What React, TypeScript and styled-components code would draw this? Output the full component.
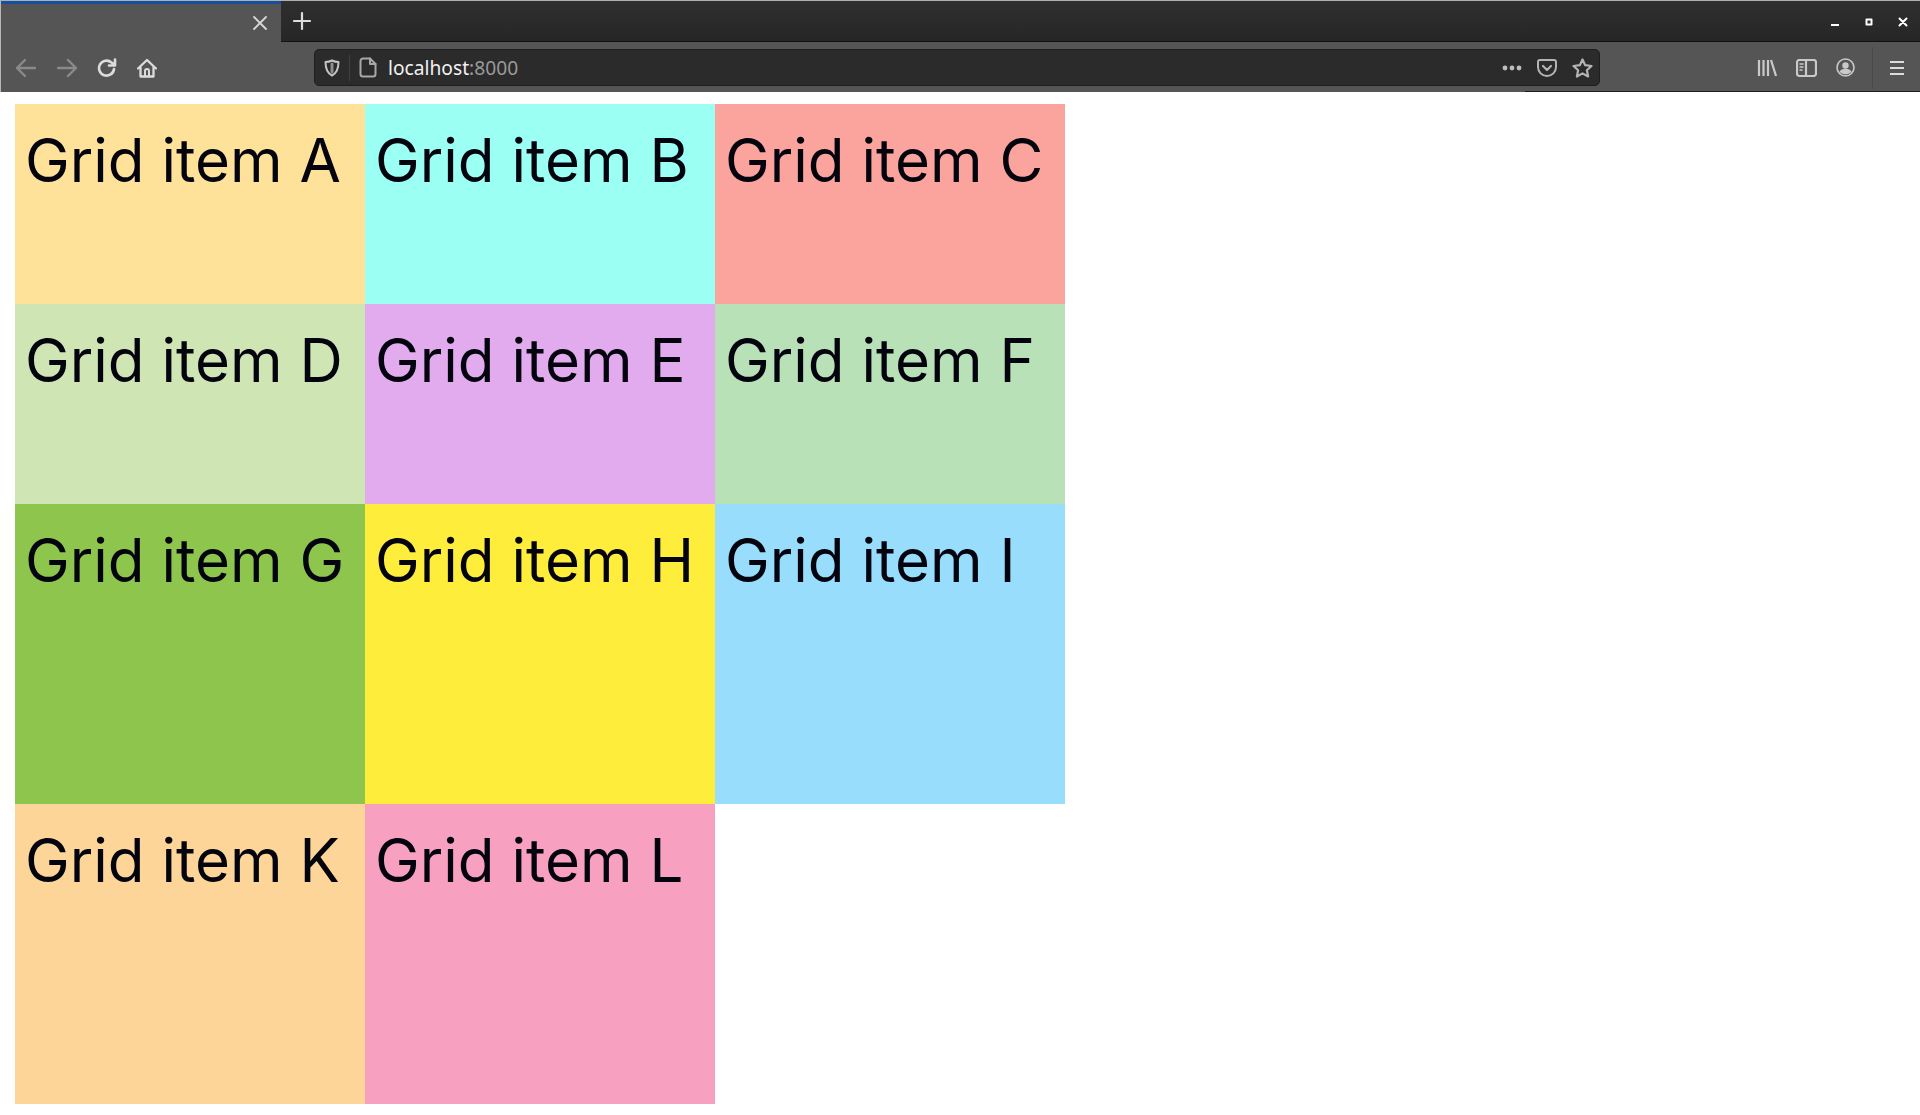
import React from 'react';
import styled, { createGlobalStyle } from 'styled-components';

const Global = createGlobalStyle`
  html, body { margin: 0; padding: 0; background: #fff; overflow: hidden; }
  body { font-family: Inter, "Liberation Sans", sans-serif; }
`;

const Screen = styled.div`
  width: 1920px;
  height: 1115px;
  display: flex;
  flex-direction: column;
  overflow: hidden;
  background: #fff;
`;

const Browser = styled.header`
  display: flex;
  flex-direction: column;
  flex: none;
  height: 92px;
  border-left: 1px solid #b8b8b8;
  border-top: 1px solid #b0b0b0;
  box-sizing: border-box;
  background: #555;
  position: relative;
`;

const TabStrip = styled.div`
  display: flex;
  height: 41px;
  flex: none;
  background: linear-gradient(#2f2f2f, #262626);
  border-bottom: 1px solid #111;
  box-sizing: border-box;
`;

const Tab = styled.div`
  width: 280px;
  height: 41px;
  flex: none;
  box-sizing: border-box;
  background: #555;
  border-top: 3px solid #17509f;
  display: flex;
  align-items: center;
  justify-content: flex-end;
  padding: 0 13px 0 0;
`;

const NewTab = styled.button`
  width: 42px;
  height: 40px;
  border: 0;
  padding: 0;
  background: transparent;
  display: flex;
  align-items: center;
  justify-content: center;
`;

const Spacer = styled.div`
  flex: 1;
`;

const WindowControls = styled.div`
  display: flex;
  align-items: center;
  gap: 18px;
  padding: 2px 9px 0 0;
`;

const WinButton = styled.div`
  width: 16px;
  height: 16px;
  display: flex;
  align-items: center;
  justify-content: center;
`;

const Toolbar = styled.div`
  height: 50px;
  flex: none;
  display: flex;
  align-items: center;
  box-sizing: border-box;
  padding: 1px 0 0 0;
  background: #555;
`;

const NavGroup = styled.div`
  width: 313px;
  flex: none;
  display: flex;
  align-items: center;
  padding-left: 14px;
  box-sizing: border-box;
  gap: 20px;
`;

const ForwardSlot = styled.span`
  display: block;
  margin: 0 -1px 0 1px;
`;

const UrlBar = styled.div`
  width: 1286px;
  height: 37px;
  flex: none;
  box-sizing: border-box;
  background: #2b2b2b;
  border: 1px solid #1e1e1e;
  border-radius: 5px;
  display: flex;
  align-items: center;
  padding: 0 6px 0 9px;
`;

const Divider = styled.span`
  width: 1px;
  height: 26px;
  background: #3f3f3f;
  margin: 0 9px 0 9px;
  flex: none;
`;

const Url = styled.div`
  margin-left: 11px;
  font-family: "Noto Sans", sans-serif;
  font-size: 19.2px;
  color: #f2f2f2;
  flex: 1;
  white-space: nowrap;
`;

const Port = styled.span`
  color: #9a9a9a;
`;

const UrlActions = styled.div`
  display: flex;
  align-items: center;
  gap: 15px;
`;

const ToolActions = styled.div`
  flex: 1;
  display: flex;
  align-items: center;
  justify-content: flex-end;
  gap: 19px;
  padding-right: 15px;
`;

const ToolSep = styled.span`
  width: 1px;
  height: 42px;
  background: #4a4a4a;
  margin: 0 -3px 0 -2px;
`;

const EdgeLine = styled.div`
  position: absolute;
  left: 1524px;
  right: 0;
  bottom: 0;
  height: 1px;
  background: #1d1d1d;
`;

const Page = styled.main`
  flex: 1;
  padding: 12px 15px 0;
`;

const Grid = styled.div`
  display: grid;
  grid-template-columns: repeat(3, 350px);
  grid-template-rows: 200px 200px 300px 300px;
  width: 1050px;
`;

const Cell = styled.div<{ $bg: string }>`
  background: ${p => p.$bg};
  color: #04040f;
  font-family: Inter, sans-serif;
  font-size: 60px;
  line-height: 74px;
  padding: 19px 10px;
  box-sizing: border-box;
  white-space: nowrap;
`;

const Ico = styled.svg`
  display: block;
  flex: none;
  fill: none;
  stroke-linecap: round;
  stroke-linejoin: round;
`;

const items: [string, string][] = [
  ['A', '#ffe299'], ['B', '#9cfff3'], ['C', '#faa49d'],
  ['D', '#d0e5b4'], ['E', '#e1abed'], ['F', '#b9e1b8'],
  ['G', '#8ec54c'], ['H', '#ffed3c'], ['I', '#99ddfd'],
  ['K', '#fed598'], ['L', '#f8a0bf'],
];

export default function App() {
  return (
    <Screen>
      <Global />
      <Browser>
        <TabStrip>
          <Tab>
            <Ico width="16" height="16" viewBox="0 0 16 16" stroke="#d8d8d8" strokeWidth="1.8">
              <path d="M2 2 14 14M14 2 2 14" />
            </Ico>
          </Tab>
          <NewTab>
            <Ico width="20" height="20" viewBox="0 0 20 20" stroke="#dcdcdc" strokeWidth="2.2">
              <path d="M10 2v16M2 10h16" />
            </Ico>
          </NewTab>
          <Spacer />
          <WindowControls>
            <WinButton>
              <Ico width="10" height="10" viewBox="0 0 10 10" stroke="#fff" strokeWidth="2">
                <path d="M1 8h8" strokeLinecap="butt" />
              </Ico>
            </WinButton>
            <WinButton>
              <Ico width="8" height="8" viewBox="0 0 8 8" stroke="#fff" strokeWidth="2">
                <rect x="1.5" y="1.5" width="5" height="5" />
              </Ico>
            </WinButton>
            <WinButton>
              <Ico width="10" height="10" viewBox="0 0 10 10" stroke="#fff" strokeWidth="2">
                <path d="M1.5 1.5 8.5 8.5M8.5 1.5 1.5 8.5" />
              </Ico>
            </WinButton>
          </WindowControls>
        </TabStrip>
        <Toolbar>
          <NavGroup>
            <Ico width="21" height="20" viewBox="0 0 21 20" stroke="#8a8a8a" strokeWidth="2.4">
              <path d="M20 10H2M10 2 2 10l8 8" />
            </Ico>
            <ForwardSlot>
              <Ico width="21" height="20" viewBox="0 0 21 20" stroke="#8a8a8a" strokeWidth="2.4">
                <path d="M1 10h18M11 2l8 8-8 8" />
              </Ico>
            </ForwardSlot>
            <Ico width="20" height="20" viewBox="0 0 20 20" stroke="#dcdcdc" strokeWidth="2.6">
              <path d="M17 11a7.500 7.500 0 1 1-2.400-6.400L17.500 7M18 1.500V7.500h-6" />
            </Ico>
            <Ico width="20" height="20" viewBox="0 0 20 20" stroke="#dcdcdc" strokeWidth="2.3">
              <path d="M1 10.500 10 2l9 8.500M3.500 9v9.500h13V9" />
              <path d="M8 18.500V13a2 2 0 0 1 4 0v5.500" strokeWidth="2" />
            </Ico>
          </NavGroup>
          <UrlBar>
            <Ico width="16" height="18" viewBox="0 0 16 18" stroke="#c4c4c4" strokeWidth="2">
              <path d="M8 1.500c2 1 4 1.500 6.500 1.500 0 6-1.500 11-6.500 13.500C3 14 1.500 9 1.500 3 4 3 6 2.500 8 1.500Z" />
              <path d="M8 5v8" strokeWidth="3" stroke="#8f8f8f" />
            </Ico>
            <Divider />
            <Ico width="18" height="21" viewBox="0 0 18 21" stroke="#a8a8a8" strokeWidth="2">
              <path d="M11 1.500H4A2.500 2.500 0 0 0 1.500 4v13A2.500 2.500 0 0 0 4 19.500h10a2.500 2.500 0 0 0 2.500-2.500V7L11 1.500Z" />
              <path d="M11 1.500V7h5.500" />
            </Ico>
            <Url>localhost<Port>:8000</Port></Url>
            <UrlActions>
              <Ico width="20" height="6" viewBox="0 0 20 6">
                <circle cx="3" cy="3" r="2.400" fill="#bdbdbd" />
                <circle cx="10" cy="3" r="2.400" fill="#bdbdbd" />
                <circle cx="17" cy="3" r="2.400" fill="#bdbdbd" />
              </Ico>
              <Ico width="20" height="18" viewBox="0 0 20 18" stroke="#b4b4b4" strokeWidth="2">
                <path d="M1 3a2 2 0 0 1 2-2h14a2 2 0 0 1 2 2v5a9 9 0 0 1-18 0V3Z" />
                <path d="M6 7l4 4 4-4" strokeWidth="2.200" />
              </Ico>
              <Ico width="21" height="20" viewBox="0 0 21 20" stroke="#b4b4b4" strokeWidth="2.2">
                <path d="m10.500 1.500 2.700 5.700 6.300.8-4.600 4.300 1.200 6.200-5.600-3.100-5.600 3.100 1.200-6.200L1.500 8l6.300-.8 2.700-5.700Z" />
              </Ico>
            </UrlActions>
          </UrlBar>
          <ToolActions>
            <Ico width="20" height="18" viewBox="0 0 20 18" stroke="#c9c9c9" strokeWidth="2.2">
              <path d="M2 1v16M6.500 1v16M11 1v16M14 1l5 16" strokeLinecap="butt" />
            </Ico>
            <Ico width="21" height="18" viewBox="0 0 21 18" stroke="#c9c9c9" strokeWidth="2.2">
              <rect x="1" y="1" width="19" height="16" rx="2.500" />
              <path d="M10 1v16" />
              <path d="M4 5h3M4 8h3M4 11h2" strokeWidth="1.500" />
            </Ico>
            <Ico width="19" height="19" viewBox="0 0 19 19" stroke="#c9c9c9" strokeWidth="1.600">
              <circle cx="9.500" cy="9.500" r="8.500" />
              <circle cx="9.500" cy="7.500" r="3.200" fill="#c9c9c9" stroke="none" />
              <path d="M3.500 14c1-2.500 3-3.200 6-3.200s5 .7 6 3.200a8.500 8.500 0 0 1-12 0Z" fill="#c9c9c9" stroke="none" />
            </Ico>
            <ToolSep />
            <Ico width="16" height="16" viewBox="0 0 16 16" stroke="#dcdcdc" strokeWidth="2.2">
              <path d="M1 2h14M1 8h14M1 14h14" strokeLinecap="butt" />
            </Ico>
          </ToolActions>
        </Toolbar>
        <EdgeLine />
      </Browser>
      <Page>
        <Grid>
          {items.map(([l, c]) => (
            <Cell key={l} $bg={c}>Grid item {l}</Cell>
          ))}
        </Grid>
      </Page>
    </Screen>
  );
}
